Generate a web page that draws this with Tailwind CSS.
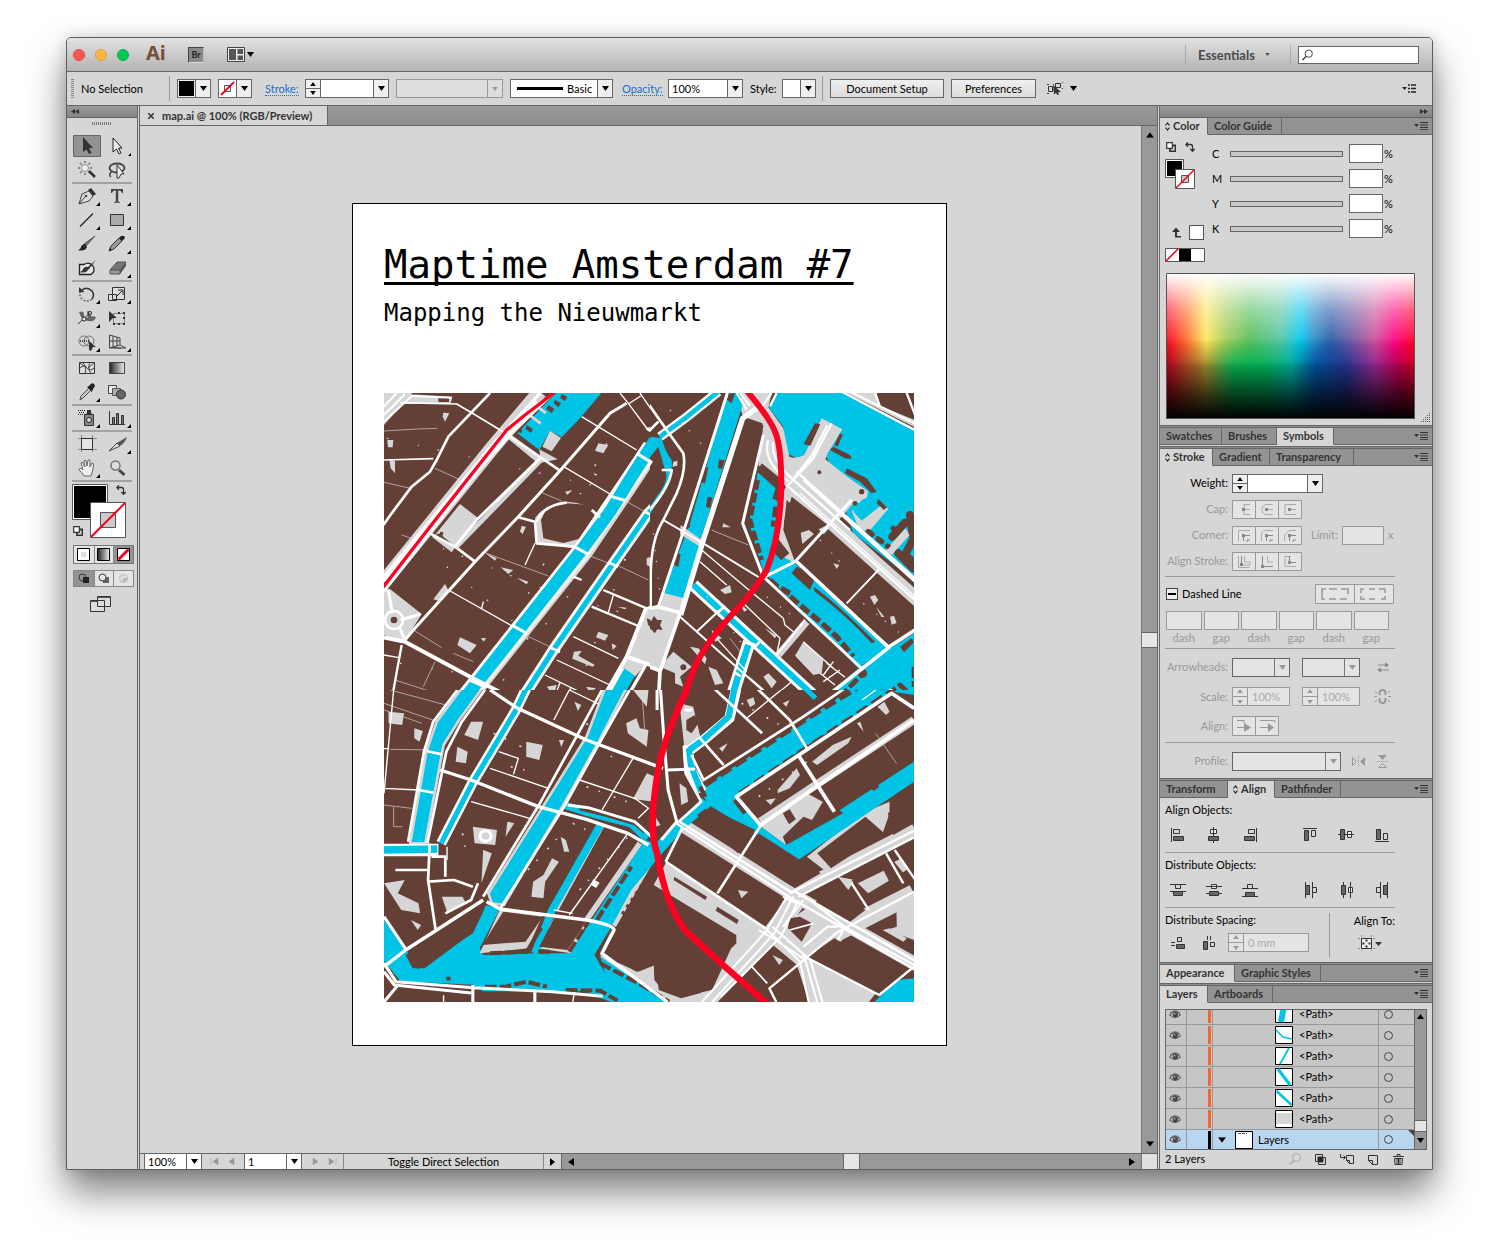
<!DOCTYPE html>
<html lang="en">
<head>
<meta charset="utf-8">
<title>map.ai @ 100% (RGB/Preview)</title>
<script src="https://cdn.jsdelivr.net/npm/@tailwindcss/browser@4"></script>
</head>
<body class="flex min-h-screen flex-col bg-white px-[66px] pt-[37px] pb-[90px] font-['Lato','Liberation_Sans',sans-serif] text-[11px] leading-[14px] text-black">

<!-- Shared glyphs -->
<svg class="hidden">
  <symbol id="down" viewBox="0 0 7 5"><path d="M0 0h7L3.500 5z" fill="currentColor"/></symbol>
  <symbol id="up" viewBox="0 0 7 5"><path d="M0 5h7L3.500 0z" fill="currentColor"/></symbol>
  <symbol id="menu" viewBox="0 0 14 8"><path d="M0 2h5L2.500 5z" fill="#333"/><path d="M6 .5h8M6 3h8M6 5.500h8M6 7.700h8" stroke="#333"/></symbol>
  <symbol id="updown" viewBox="0 0 5 9"><path d="M.5 3.500L2.500 1l2 2.500M.5 5.500L2.500 8l2-2.500" fill="none" stroke="#222" stroke-width="1.200"/></symbol>
  <symbol id="defaults" viewBox="0 0 10 10"><path d="M4 3.500h5.500v6H4z" fill="none" stroke="#333" stroke-width="1.800"/><path d="M.7.7h5.600v5.600H.7z" fill="#fff" stroke="#333" stroke-width="1.200"/></symbol>
  <symbol id="swap" viewBox="0 0 10 10"><path d="M1 2.500h4.500q2 0 2 2V9M3 .3L.8 2.500 3 4.700M5.300 7L7.500 9.300 9.700 7" fill="none" stroke="#333" stroke-width="1.300"/></symbol>
  <symbol id="corner" viewBox="0 0 4 4"><path d="M4 0v4H0z"/></symbol>
  <symbol id="eye" viewBox="0 0 12 9"><path d="M.5 4.800Q6-1.500 11.500 4.800 6 10 .5 4.800z" fill="#c6c6c6" stroke="#444"/><path d="M1 3Q6-1.500 11 3" fill="none" stroke="#444" stroke-width=".7"/><circle cx="6.300" cy="4.500" r="2.600" fill="#444"/><circle cx="5.600" cy="3.800" r=".8" fill="#ccc"/></symbol>
</svg>

<main class="flex flex-1 flex-col rounded-t-[5px] border border-[#5e5e5e] bg-[#d6d6d6] shadow-[0_22px_38px_rgba(0,0,0,0.5),0_0_14px_rgba(0,0,0,0.15)]">

  <!-- Title bar -->
  <header class="flex h-[34px] items-center rounded-t-[4px] border-b border-[#666] bg-linear-to-b from-[#e2e2e2] to-[#b4b4b4] pr-[13px] pl-[6px]">
    <button aria-label="Close" class="size-3 rounded-full border border-[#e2463f] bg-[#fc5753]"></button>
    <button aria-label="Minimize" class="ml-[10px] size-3 rounded-full border border-[#e0a032] bg-[#fdb844]"></button>
    <button aria-label="Zoom" class="ml-[10px] size-3 rounded-full border border-[#12ac46] bg-[#00ca56]"></button>
    <span class="ml-[17px] w-[20px] pb-1 font-['Noto_Sans',sans-serif] text-[20px] leading-6 font-bold text-[#74503a]">Ai</span>
    <button class="ml-[22px] size-4 border border-r-[#bbb] border-b-[#ddd] border-l-[#444] border-t-[#444] bg-[#8a8a8a] text-[9px] leading-[14px] font-bold text-[#222]">Br</button>
    <button aria-label="Arrange documents" class="ml-[23px] flex items-center gap-[2px]">
      <svg class="h-[15px] w-[18px]" viewBox="0 0 18 15"><path d="M.5.5h17v14H.5z" fill="#eee" stroke="#444"/><path d="M2 2h7v11H2zM10.500 2H16v5h-5.500zM10.500 8.500H16V13h-5.500z" fill="#555"/></svg>
      <svg class="h-[5px] w-[7px]"><use href="#down"/></svg>
    </button>
    <button class="ml-auto flex h-5 w-[106px] items-center gap-[9px] border-x border-[#aaa] pl-[12px] text-[13px] font-bold text-[#4a4a4a]">Essentials <svg class="ml-px h-[3px] w-[5px]"><use href="#down"/></svg></button>
    <label class="ml-[7px] flex h-[18px] w-[121px] items-center border border-[#666] bg-white px-[3px]">
      <svg class="size-[12px]" viewBox="0 0 12 12" fill="none" stroke="#333"><circle cx="7.500" cy="4.500" r="4"/><path d="M4.500 7.500L.5 11.500" stroke-width="1.500"/></svg>
      <input aria-label="Search" class="w-full min-w-0 outline-none">
    </label>
  </header>

  <!-- Control bar -->
  <div class="flex h-[34px] items-center border-b border-[#666] bg-[#d6d6d6] pr-4 pl-1">
    <svg class="h-5 w-[3px]"><path d="M1.500 0v20" stroke="#888" stroke-width="3" stroke-dasharray="1 1"/></svg>
    <span class="ml-[7px] w-[88px]">No Selection</span>
    <span class="h-[25px] w-[8px] border-l border-[#999]"></span>
    <button aria-label="Fill" class="flex h-[19px] w-[34px] border border-[#666] bg-[#efefef]"><span class="m-px h-[15px] w-[15px] bg-black"></span><span class="flex h-full flex-1 items-center justify-center border-l border-[#666]"><svg class="h-[5px] w-[7px]"><use href="#down"/></svg></span></button>
    <button aria-label="Stroke color" class="ml-[7px] flex h-[19px] w-[34px] border border-[#666] bg-[#efefef]"><svg class="h-[17px] w-[17px]" viewBox="0 0 17 17"><path d="M0 0h17v17H0z" fill="#fff"/><path d="M5.500 5.500h6v6h-6z" fill="none" stroke="#555"/><path d="M2 15L15 2" stroke="#f00020" stroke-width="1.800"/></svg><span class="flex h-full flex-1 items-center justify-center border-l border-[#666]"><svg class="h-[5px] w-[7px]"><use href="#down"/></svg></span></button>
    <a href="#stroke" class="ml-[13px] w-[40px] text-[#1a6fd0]"><span class="border-b border-dotted border-[#1a6fd0]">Stroke:</span></a>
    <div class="flex h-[19px] w-[84px] border border-[#666] bg-white">
      <div class="flex w-[15px] flex-col border-r border-[#666] bg-[#efefef]">
        <button aria-label="Increase stroke" class="flex flex-1 items-center justify-center border-b border-[#666]"><svg class="h-1 w-[6px]"><use href="#up"/></svg></button>
        <button aria-label="Decrease stroke" class="flex flex-1 items-center justify-center"><svg class="h-1 w-[6px]"><use href="#down"/></svg></button>
      </div>
      <input aria-label="Stroke weight" class="min-w-0 flex-1 px-1 outline-none">
      <button aria-label="Stroke weights" class="flex w-[15px] items-center justify-center border-l border-[#666] bg-[#efefef]"><svg class="h-[5px] w-[7px]"><use href="#down"/></svg></button>
    </div>
    <div class="relative ml-[7px] h-[19px] w-[107px]">
      <select aria-label="Variable width profile" disabled class="h-full w-full appearance-none border border-[#999] bg-[#dedede]"></select>
      <span class="pointer-events-none absolute inset-y-px right-px flex w-[15px] items-center justify-center border-l border-[#999] text-[#999]"><svg class="h-1 w-[6px]"><use href="#down"/></svg></span>
    </div>
    <button aria-label="Brush definition" class="ml-[7px] flex h-[19px] w-[103px] items-center border border-[#666] bg-white"><span class="ml-[6px] h-[3px] w-[46px] bg-black"></span><span class="ml-[4px]">Basic</span><span class="ml-auto flex h-full w-[15px] items-center justify-center border-l border-[#666] bg-[#efefef]"><svg class="h-[5px] w-[7px]"><use href="#down"/></svg></span></button>
    <a href="#opacity" class="ml-[9px] w-[46px] text-[#1a6fd0]"><span class="border-b border-dotted border-[#1a6fd0]">Opacity:</span></a>
    <div class="flex h-[19px] w-[75px] border border-[#666] bg-white">
      <input aria-label="Opacity" value="100%" class="min-w-0 flex-1 px-[3px] outline-none">
      <button aria-label="Opacity values" class="flex w-[15px] items-center justify-center border-l border-[#666] bg-[#efefef]"><svg class="h-[5px] w-[7px]"><use href="#down"/></svg></button>
    </div>
    <span class="ml-[7px] w-[32px]">Style:</span>
    <button aria-label="Graphic style" class="flex h-[19px] w-[34px] border border-[#666] bg-[#efefef]"><span class="h-full w-[17px] bg-white"></span><span class="flex h-full flex-1 items-center justify-center border-l border-[#666]"><svg class="h-[5px] w-[7px]"><use href="#down"/></svg></span></button>
    <span class="ml-[6px] h-[25px] w-[8px] border-l border-[#999]"></span>
    <button class="h-[19px] w-[114px] border border-[#666] bg-linear-to-b from-[#f0f0f0] to-[#dcdcdc]">Document Setup</button>
    <button class="ml-[7px] h-[19px] w-[85px] border border-[#666] bg-linear-to-b from-[#f0f0f0] to-[#dcdcdc]">Preferences</button>
    <button aria-label="Select similar objects" class="ml-[11px] flex items-center gap-[6px]">
      <svg class="h-[14px] w-[17px]" viewBox="0 0 17 14"><path d="M1.500 4.500h4v5h-4zM8.500 1.500h5v4h-5z" fill="none" stroke="#333"/><path d="M0 2.500h2M0 11.500h2M6 2.500h1M14.500 0h2M15 6.500h1" stroke="#333"/><path d="M6 3l8 7-3 .3 1 2-1.500 1-1.500-2.500-2 1.700z" fill="#333"/></svg>
      <svg class="h-[5px] w-[7px]"><use href="#down"/></svg>
    </button>
    <button aria-label="Control bar menu" class="ml-auto"><svg class="h-[9px] w-[14px]" viewBox="0 0 14 9"><path d="M0 3h5L2.500 6z" fill="#222"/><path d="M6 1h2m1 0h5M6 4.500h2m1 0h5M6 8h2m1 0h5" stroke="#222" stroke-width="1.500"/></svg></button>
  </div>

  <div class="flex flex-1">

    <!-- Tools -->
    <aside class="flex w-[71px] flex-col border-r border-[#666] bg-[#d6d6d6]">
      <button aria-label="Collapse tools" class="flex h-[12px] items-center border-b border-[#666] bg-linear-to-b from-[#9a9a9a] to-[#858585] pl-1"><svg class="h-[5px] w-[8px]" viewBox="0 0 8 5"><path d="M4 0v5L0 2.500zM8 0v5L4 2.500z" fill="#333"/></svg></button>
      <svg class="mt-[4px] mb-[9px] h-[3px] w-[20px] self-center"><path d="M0 1.500h20" stroke="#777" stroke-width="3" stroke-dasharray="1 1"/></svg>
      <div class="px-[5px] [&_button]:flex [&_button]:h-6 [&_button]:items-center [&_button]:justify-center [&_svg]:h-[22px] [&_svg]:w-[28px]">
        <div class="grid grid-cols-2 border-b-2 border-[#a2a2a2]">
          <button aria-label="Selection"><svg viewBox="-14 -11 28 22"><path d="M-13.500-10.500h27v21h-27z" fill="#939393" stroke="#666"/><path d="M-4-9L6 2H2L4.500 7 2 8-.5 3.500-4 6z" fill="#333"/></svg></button>
          <button aria-label="Direct selection"><svg viewBox="-14 -11 28 22"><path d="M-4-8L5 2H1.500L4 7 2 8-.5 3-4 6z" fill="#eee" stroke="#222"/><use href="#corner" x="11" y="6" width="4" height="4"/></svg></button>
          <button aria-label="Magic wand"><svg viewBox="-14 -11 28 22"><path d="M-2-9v14M-9-2H5M-7-7L3 3M3-7L-7 3" stroke="#888" stroke-width="2" stroke-dasharray="2 1"/><circle cx="-2" cy="-2" r="3.500" fill="#eee" stroke="#999"/><path d="M2 1l6 6" stroke="#333" stroke-width="2.500"/></svg></button>
          <button aria-label="Lasso"><svg viewBox="-14 -11 28 22"><ellipse cy="-2" rx="7.500" ry="4.500" fill="none" stroke="#444" stroke-width="1.800"/><path d="M-5 1q-4 4-1 6" fill="none" stroke="#444" stroke-width="1.500"/><path d="M0-5L7 4H4L2 8 0 8z" fill="#eee" stroke="#333"/></svg></button>
        </div>
        <div class="grid grid-cols-2 border-b-2 border-[#a2a2a2]">
          <button aria-label="Pen"><svg viewBox="-14 -11 28 22"><path d="M-8 8L-5-2 2-5 6 0 2 5zM-8 8l6-7" fill="#ddd" stroke="#444"/><path d="M1-6l3-2 5 6-3 2z" fill="#333"/><circle cx="-1" cy="0" r="1.300" fill="#444"/><use href="#corner" x="9" y="6" width="4" height="4"/></svg></button>
          <button aria-label="Type"><svg viewBox="-14 -11 28 22"><path d="M-6-7H6v4H5Q4.500-5.500 2-5.500H1.200V5Q1.200 6 3 6v.8h-6V6Q-1.200 6-1.200 5V-5.500H-2Q-4.500-5.500-5-3h-1z" fill="#444"/><use href="#corner" x="10" y="6" width="4" height="4"/></svg></button>
          <button aria-label="Line"><svg viewBox="-14 -11 28 22"><path d="M-7 6.500L6-6.500" stroke="#222" stroke-width="1.300"/><use href="#corner" x="9" y="6" width="4" height="4"/></svg></button>
          <button aria-label="Rectangle"><svg viewBox="-14 -11 28 22"><path d="M-6.500-5.500h13v11h-13z" fill="#aaa" stroke="#333"/><use href="#corner" x="10" y="6" width="4" height="4"/></svg></button>
          <button aria-label="Paintbrush"><svg viewBox="-14 -11 28 22"><path d="M8-8L-1 2l-2-2z" fill="#777" stroke="#555"/><path d="M-2 0l2 3Q-2 8-9 6q3-1 3-3 1-3 4-3z" fill="#222"/></svg></button>
          <button aria-label="Pencil"><svg viewBox="-14 -11 28 22"><path d="M-8 7l2-5 8-8 3 3-8 8z" fill="#999" stroke="#333"/><path d="M2-6q3-4 6-1 0 2-3 4zM-8 7l1-3 2 2z" fill="#222"/><use href="#corner" x="10" y="6" width="4" height="4"/></svg></button>
          <button aria-label="Blob brush"><svg viewBox="-14 -11 28 22"><path d="M-7.500-3.500H-3Q2-7 6-2q3 5-2 8.500h-11.500z" fill="#e4e4e4" stroke="#222" stroke-width="1.300"/><path d="M9-8L2 1-1 4q-5 1-6 0 3-1 3-3 2-3 5-2z" fill="#333"/></svg></button>
          <button aria-label="Eraser"><svg viewBox="-14 -11 28 22"><path d="M-7 2L0-6h9L3 2z" fill="#777" stroke="#555"/><path d="M-7 2H3v4h-10z" fill="#999" stroke="#555"/><path d="M3 2l6-8v4L3 6z" fill="#555"/><use href="#corner" x="10" y="6" width="4" height="4"/></svg></button>
        </div>
        <div class="grid grid-cols-2 border-b-2 border-[#a2a2a2]">
          <button aria-label="Rotate"><svg viewBox="-14 -11 28 22"><path d="M-5-4Q0-8 5-3q3 4 0 8" fill="none" stroke="#333" stroke-width="1.500"/><path d="M5 5Q0 9-5 5q-3-3-2-7" fill="none" stroke="#666" stroke-width="1.500" stroke-dasharray="2 1.500"/><path d="M-8-7v5.500l5.500-.5z" fill="#333"/><use href="#corner" x="9" y="6" width="4" height="4"/></svg></button>
          <button aria-label="Scale"><svg viewBox="-14 -11 28 22"><path d="M-4.500-6.500h12v12h-12zM-8.500.500h8v6h-8z" fill="#ddd" stroke="#333"/><path d="M-1 3l6-6M1-4h5v5" fill="none" stroke="#222"/><use href="#corner" x="10" y="6" width="4" height="4"/></svg></button>
          <button aria-label="Width"><svg viewBox="-14 -11 28 22"><path d="M-8-6q5-2 5 3t4 2q-2-6 0-6t3 5l5 1q-1 5-8 4-7-1-9-9z" fill="#666"/><path d="M-9 6L4-6" stroke="#333"/><circle cx="-3" cy="1" r="2" fill="#eee" stroke="#222"/><circle cx="3" cy="-5" r="1.500" fill="#eee" stroke="#222"/><use href="#corner" x="9" y="6" width="4" height="4"/></svg></button>
          <button aria-label="Free transform"><svg viewBox="-14 -11 28 22"><path d="M-3.500-4.500h11v10h-11z" fill="none" stroke="#333" stroke-dasharray="1 1"/><path d="M-8-7l8 7h-4l-4 4z" fill="#333"/><path d="M6-6h2v2H6zM6 5h2v2H6zM-4 5h2v2h-2zM1-6h2v2H1zM1 5h2v2H1zM6-1h2v2H6z" fill="#333"/></svg></button>
          <button aria-label="Shape builder"><svg viewBox="-14 -11 28 22"><circle cx="-3" cy="-1" r="5" fill="none" stroke="#777"/><circle cx="2" cy="-1" r="5" fill="none" stroke="#777"/><path d="M-7-1H3" stroke="#222" stroke-width="1.500" stroke-dasharray="1 1"/><path d="M2-1l7 6H6L4 9 2 8z" fill="#333"/><use href="#corner" x="9" y="6" width="4" height="4"/></svg></button>
          <button aria-label="Perspective grid"><svg viewBox="-14 -11 28 22"><path d="M-7.500-7v13h16M-7.500-7L3-4v7L-7.500 6M-4-6V5M0-5V4M-7.500-1H3M3 3l6 3M-4 5l8 1.500" fill="none" stroke="#444"/><use href="#corner" x="10" y="6" width="4" height="4"/></svg></button>
        </div>
        <div class="grid grid-cols-2 border-b-2 border-[#a2a2a2]">
          <button aria-label="Mesh"><svg viewBox="-14 -11 28 22"><path d="M-7.500-5.500h15v11h-15z" fill="#ddd" stroke="#333"/><path d="M-7 0q4-4 7 0t7 0M-4-5q4 3 2 11M3-5q-3 4 1 11M-7-5l5 4M7-5L1 0" fill="none" stroke="#444"/></svg></button>
          <button aria-label="Gradient"><svg viewBox="-14 -11 28 22"><defs><linearGradient id="gt"><stop stop-color="#222"/><stop offset="1" stop-color="#eee"/></linearGradient></defs><path d="M-7.500-5.500h15v11h-15z" fill="url(#gt)" stroke="#444"/></svg></button>
          <button aria-label="Eyedropper"><svg viewBox="-14 -11 28 22"><path d="M-7 8q0-4 3-6l6-6 2 2-7 7q-2 2-4 3z" fill="#ccc" stroke="#444"/><path d="M0-5l2-1q3-4 5-2t-1 5L5 0z" fill="#222"/><use href="#corner" x="9" y="6" width="4" height="4"/></svg></button>
          <button aria-label="Blend"><svg viewBox="-14 -11 28 22"><path d="M-8.500-6.500h8v8h-8z" fill="#eee" stroke="#444"/><path d="M-4.500-3.500h8v7h-8z" fill="#aaa" stroke="#555"/><circle cx="4" cy="2.500" r="4.500" fill="#666" stroke="#333"/></svg></button>
        </div>
        <div class="grid grid-cols-2 border-b-2 border-[#a2a2a2]">
          <button aria-label="Symbol sprayer"><svg viewBox="-14 -11 28 22"><path d="M-2.500-3.500h9v11h-9z" fill="#888" stroke="#333"/><path d="M0-8h4v3l1 1h-6l1-1z" fill="#333"/><circle cx="2" cy="2" r="2.500" fill="#ddd" stroke="#222"/><path d="M-9-7.500h8M-8-5.500h6M-9-3.500h5" stroke="#222" stroke-dasharray="1 1"/><use href="#corner" x="9" y="6" width="4" height="4"/></svg></button>
          <button aria-label="Column graph"><svg viewBox="-14 -11 28 22"><path d="M-7.500-7v13.500H8" fill="none" stroke="#333"/><path d="M-4.500-.5h2v7h-2zM-.5-4.500h2v11h-2zM4.500-2.500h2v9h-2z" fill="#777" stroke="#333"/><use href="#corner" x="10" y="6" width="4" height="4"/></svg></button>
        </div>
        <div class="grid grid-cols-2 border-b-2 border-[#a2a2a2]">
          <button aria-label="Artboard"><svg viewBox="-14 -11 28 22"><path d="M-9-5.500h19M-9 5.500h19M-5.500-9V8M5.500-9V8" stroke="#888"/><path d="M-5.500-5.500h11v11h-11z" fill="#e4e4e4" stroke="#333"/></svg></button>
          <button aria-label="Slice"><svg viewBox="-14 -11 28 22"><path d="M10-7L0-1l3 3q5-3 7-9z" fill="#555"/><path d="M0-1l3 3-11 5z" fill="#ddd" stroke="#444"/><use href="#corner" x="10" y="6" width="4" height="4"/></svg></button>
          <button aria-label="Hand"><svg viewBox="-14 -11 28 22"><path d="M-3 8q-2-4-5-6 0-3 4-.5L-6-5q1-2 2 0l2 4-1-6q1-2 2 0l1 5 1-6q2-1 2 1L3-1l2-4q2 0 1.500 2Q6 3 4 8z" fill="#eee" stroke="#666"/><use href="#corner" x="9" y="6" width="4" height="4"/></svg></button>
          <button aria-label="Zoom tool"><svg viewBox="-14 -11 28 22"><path d="M2 2l5.500 5" stroke="#444" stroke-width="3"/><circle cx="-1.500" cy="-2.500" r="4.500" fill="#ddd" stroke="#777" stroke-width="1.500"/></svg></button>
        </div>
      </div>
      <svg class="mt-[2px] ml-[5px] h-[56px] w-[60px]" viewBox="0 0 60 56"><path d="M.5.5h35v35H.5z" fill="#fff" stroke="#555"/><path d="M2 2h32v32H2z"/><path d="M18.500 18.500h35v35h-35z" fill="#fff" stroke="#555"/><path d="M28.500 28.500h15v15h-15z" fill="#ccc" stroke="#555"/><path d="M19 53L53 19" stroke="#f00020" stroke-width="2"/><use href="#swap" x="44" y="1" width="10" height="10"/><use href="#defaults" x="1" y="42" width="10" height="10"/></svg>
      <div class="mt-[5px] ml-[6px] grid h-[19px] w-[61px] grid-cols-3 border border-[#777] bg-[#e4e4e4]">
        <button aria-label="Color" class="flex items-center justify-center"><svg class="size-[13px]"><path d="M.5.5h12v12H.5z" fill="#fff" stroke="#000"/><path d="M4 4h5v5H4z" fill="#ddd"/></svg></button>
        <button aria-label="Gradient fill" class="flex items-center justify-center border-l border-[#888]"><svg class="size-[13px]"><path d="M.5.5h12v12H.5z" fill="url(#gt)" stroke="#000"/></svg></button>
        <button aria-label="None" class="flex items-center justify-center border-l border-[#888] bg-[#939393]"><svg class="size-[13px]"><path d="M.5.5h12v12H.5z" fill="#fff" stroke="#000"/><path d="M1.500 11.500l10-10" stroke="#f00020" stroke-width="3"/></svg></button>
      </div>
      <div class="mt-[6px] ml-[6px] grid h-[17px] w-[61px] grid-cols-3 border border-[#888] bg-[#e4e4e4]">
        <button aria-label="Draw normal" class="flex items-center justify-center bg-[#939393]"><svg class="h-[11px] w-[12px]"><circle cx="4.500" cy="4.500" r="3.500" fill="none" stroke="#333"/><path d="M5 4h6v6H5z" fill="#222"/></svg></button>
        <button aria-label="Draw behind" class="flex items-center justify-center border-l border-[#888]"><svg class="h-[11px] w-[12px]"><path d="M5 4h6v6H5z" fill="#666"/><circle cx="4.500" cy="4.500" r="3.500" fill="#eee" stroke="#333"/></svg></button>
        <button aria-label="Draw inside" disabled class="flex items-center justify-center border-l border-[#888]"><svg class="h-[11px] w-[12px]"><circle cx="5.500" cy="5.500" r="4" fill="#ddd" stroke="#bbb"/><path d="M5 5h4q0 4-4 4z" fill="#bbb"/></svg></button>
      </div>
      <button aria-label="Screen mode" class="mt-[9px] ml-[23px] w-[21px]"><svg class="h-[16px] w-[21px]"><path d="M.5 4.500h14v11H.5zM7.500.5h13v10h-13z" fill="#ddd" stroke="#333"/><path d="M1 5.500h6M8 1.500h12" stroke="#555"/></svg></button>
    </aside>

    <!-- Document -->
    <section class="ml-px flex min-w-0 flex-1 flex-col border-x border-[#666]">
      <div class="flex h-[20px] border-b border-[#666] bg-linear-to-b from-[#999] to-[#8e8e8e]">
        <div class="flex w-[188px] items-center gap-[8px] border-r border-[#666] bg-[#d6d6d6] pl-[8px] font-bold text-[#333]"><button aria-label="Close document"><svg class="size-[6px]" viewBox="0 0 6 6"><path d="M0 0l6 6M6 0L0 6" stroke="#333" stroke-width="1.500"/></svg></button><span class="whitespace-nowrap">map.ai @ 100% (RGB/Preview)</span></div>
      </div>
      <div class="flex flex-1">
        <div class="flex min-w-0 flex-1 justify-center pt-[77px] pb-[107px] pl-[18px]">
          <article class="self-start border border-black bg-white pt-[38px] pr-[32px] pb-[43px] pl-[31px] font-['DejaVu_Sans_Mono',monospace]">
            <h1 class="text-[39px] leading-[46px] whitespace-nowrap underline decoration-[3px] underline-offset-[4px] [text-decoration-skip-ink:none]">Maptime Amsterdam #7</h1>
            <p class="mt-[11px] text-[24px] leading-[28px] whitespace-nowrap">Mapping the Nieuwmarkt</p>
            <svg class="mt-[66px] h-[609px] w-[530px]" viewBox="384 393 530 609" fill="none" stroke-linejoin="round">
              <path d="M384 393h530v609H384z" fill="#643f36"/>

              <!-- North-west quarter -->
              <svg x="384" y="393" width="266" height="297" viewBox="12 9 798 891">
                <g fill="#d6d6d6">
                  <path d="M12 9h85L12 105zM80 12l137 8-5 20-142 2zM240 342l55 43-70 85-60-35zM155 440l60 47 12-17-50-40zM0 595l30 2 95 75-50 80-75-20zM195 582l10 18-30 32-15-4zM470 460l-5-75q25-40 95-50 80 5 92 45l-12 50q-40 25-60 45zM795 655l45-15v190l-105-30zM735 800l60 25-30 35-45-25zM395 135l85 62-10 20-85-70zM478 178l55 30-50 10z"/>
                  <path d="M190 68l18 2-13 25-7-15zM22 150h18l-2 22H24zM28 210l17 2v38l-13-15zM655 160l30 5-15 25-25-8zM425 408l13 2-10 22-8-7zM240 742l50 23-20 25-38-25zM315 488l35 17-5 7zM362 532l38 8-15 12zM410 563l35 12-5 8zM655 725l30 10-10 17-27-10zM582 785l23-3-10 15 50 28-8 5-60-24zM695 760l15 8-12 12zM500 890l30-5-10 30zM618 890l30 5-18 12zM712 650l28 3-5 5zM800 505l12-5v30l-12-5zM640 250l12 3-5 5zM555 305l22-5-15 15zM302 745l16-2-6 12z"/>
                </g>
                <g stroke="#d6d6d6">
                  <path d="M12 575L340 170 480 5" stroke-width="44"/>
                  <path d="M490 203L230 470" stroke-width="14"/>
                  <path d="M20 145L700 300M100 440L600 640M60 820L560 900M560 620L800 690M200 530L480 760" stroke-width="4" stroke-dasharray="5 91 3 57"/>
                  <path d="M680 160L430 640M500 700L300 860M760 440L600 880" stroke-width="5" stroke-dasharray="4 67 6 91"/>
                  <path d="M12 277l80 18M12 123l100-6 60-2M165 235l70 32M65 435l35 12M320 490l185 68M100 720l85 53M45 870l185 60M165 815l-35 75M740 335l100 55M610 490l90 35M710 525l95 45M435 735l85 40M485 308l60 25M220 790l60 25" stroke-width="2"/>
                </g>
                <path d="M483 390l17-35 60-15 72 5 14 38-6 30-35 32-55 14-60-14zM175 22h32v14h-32zM800 685l15 5 10-15 12 15h10v40l-15-8-15 10-3-18-10-10zM180 425l10 2-1 10-9-2z" fill="#643f36"/>
                <path d="M528 9h136l-64 76-55 57-35-20-32 58-66-50z" fill="#00c4e6"/>
                <path d="M510 122l33 22-28 40-28-14zM455 75l30 22-5 7-30-22zM480 50l20 15-5 8-20-15z" fill="#d6d6d6"/>
                <path d="M505 45l18 12-8 12-16-12zM525 30l18 10-8 12-14-12zM545 12l16 8-6 14-14-10zM440 105l18 12-5 12-16-12zM415 115l12 4-2 10-10-2z" fill="#643f36"/>
                <path d="M815 175L760 260 612 480 250 935" stroke="#d6d6d6" stroke-width="60"/>
                <path d="M815 170L755 260 610 475 250 930" stroke="#fff" stroke-width="54"/>
                <path d="M832 140L755 260 690 365 605 480 420 715 250 930" stroke="#00c4e6" stroke-width="37"/>
                <path d="M770 190l45 28M695 320l42 12M583 470l40 22M395 705l40 22M268 870l50 22" stroke="#fff" stroke-width="9"/>
                <path d="M845 330L805 370 700 520 520 780 420 935" stroke="#fff" stroke-width="33"/>
                <path d="M845 330L805 370 700 520 520 780 420 935" stroke="#00c4e6" stroke-width="16"/>
                <path d="M795 365l20 12M688 518l26 12M510 772l30 14" stroke="#fff" stroke-width="8"/>
                <path d="M733 835l32 22-45 80h-45z" fill="#00c4e6"/>
                <g stroke="#fff">
                  <path d="M12 50L50 9M12 75L75 12M12 95L95 18l120 5" stroke-width="6"/>
                  <path d="M60 38l170 4 45 26 110 67M12 210l148-4" stroke-width="5"/>
                  <path d="M480 9L335 170 12 558M12 603L300 235 395 130 520 9" stroke-width="9"/>
                  <path d="M12 575L340 170 470 35" stroke-width="22"/>
                  <path d="M330 9L205 140l-35 70-20 35-55 45-60 80-25 35M390 140l150 102M150 430l75 40 60 45M415 382l50 13 5 65 115 10M470 395q20-50 90-57M635 360l25 22" stroke-width="8"/>
                  <path d="M740 40l-50 30-150 172-125 138-130 135-185 205-25 30M480 205L290 390l-65 80" stroke-width="9"/>
                  <path d="M12 742l63 13 195 105 140 72M740 800l100 35M798 655l-58 145-60 105" stroke-width="12"/>
                  <path d="M205 600l195 110M555 232l145 86M605 80l165 100M720 9l25 31 57 77 38-22M780 9l60 88M745 42l37-24M580 740l135 65M530 810l160 75M495 855l155 75M572 895l-20 35M700 615l-15 53M465 460l-30 65M540 878l-20 52M310 635l-5 20M12 795l45 8" stroke-width="4"/>
                  <path d="M65 765L35 930M670 600l130 55 40-15M635 650l140 58M580 560l25 10" stroke-width="7"/>
                  <path d="M845 415q-35 60-32 130v110M800 115l35 25" stroke-width="8"/>
                  <path d="M25 600l12 70M60 715l12 30M62 690l60-18" stroke-width="9"/>
                  <circle cx="42" cy="690" r="27" stroke-width="8"/>
                  <path d="M727 836l-55 99M797 825l-60 105" stroke-width="10"/>
                </g>
                <circle cx="42" cy="690" r="10" fill="#643f36"/>
                <path d="M12 588L150 410 380 120l55-45 87-66" stroke="#ff0022" stroke-width="10"/>
              </svg>

              <!-- North-east quarter -->
              <svg x="650" y="393" width="264" height="297" viewBox="30 9 792 891">
                <path d="M385 50l30-41h195l212 106v455L640 430 560 200l-90 5-30-15-10-80z" fill="#00c4e6"/>
                <g fill="#d6d6d6">
                  <path d="M290 9h105l-10 43 45 63 18 85q20 8 45-5l52-110 62 33-43 70-8 20 70 55 58 40-5 32-40 6-42 48 125 115 102 90v90L440 330 430 420l35 95-25 5-35-80-15-180-35-35 15-120-60-20zM620 9h202v101z"/>
                  <path d="M715 340l30 17-60 70-30-15-20-50zM795 415l15 18-55 62-20-12z"/>
                  <path d="M0 655l60-10 62 20-57 180-65-20zM72 605l63 15-13 47-68-17zM100 785l55 45-35 30 10 30-25-10 0-30-45-20z"/>
                </g>
                <path d="M640 365l25-35 35-15 25 30-60 47z" fill="#00c4e6"/>
                <path d="M710 9h112v80L720 48zM455 320l108 85-53 25-30-5 5 40-25 5-28-75zM485 505l80-87 257 230v85l-75 35zM315 82l52 18-12 102-37 198h-60z" fill="#643f36"/>
                <path d="M482 428l25-8 15 12-35 30z" fill="#d6d6d6"/>
                <path d="M355 235l-28 165 43 145 285 290 95-68-285-247-55-30 10-110v-90z" fill="#00c4e6"/>
                <path d="M650 840l172-110v200H545z" fill="#00c4e6"/>
                <path d="M262 9h38l8 35L185 440l-53 185-62-17 80-208z" fill="#00c4e6"/>
                <path d="M122 405l68 48-5 20-65-40z" fill="#d6d6d6"/>
                <path d="M235 5L135 85 60 140" stroke="#fff" stroke-width="28"/>
                <path d="M235 5L135 85 60 140" stroke="#00c4e6" stroke-width="14"/>
                <path d="M0 180l35-40 30 5q10 40 30 65 5 40-20 85L0 425v-30l50-75q40-50 25-80l-20-70L0 240z" fill="#00c4e6"/>
                <path d="M365 220l50 40 22 30-20 45-20-10 10-30-55-50zM410 440l38 50-25 20-20-20zM455 550l15-20 25 10 30 25-15 35zM520 590q60 40 185 165l-10 5q-70-80-170-155zM780 770l35-25 7 12-30 30zM690 915q30-25 50-12l-40 25zM525 100l16 2-30 65-20-5zM600 130l8 5-15 35-10-5zM580 170l50 25 5 12-20-2-45-25zM620 235l60 30 30 40-15 5-35-35-45-25zM715 327l25 25-8 8-22-20zM262 12l23-3-10 31-14-10zM187 230l18 2-10 48-15-5zM237 208l17 3-8 26-12-3zM203 320l14 3-6 32-13-5zM105 490l17 2-7 38-14-5z" fill="#643f36"/>
                <path d="M757 440l38-42M810 375l8 60M775 490l45 45M800 485l18-35M800 500l20 15" stroke="#643f36" stroke-width="24" stroke-linecap="round"/>
                <path d="M685 425l60 45M760 415l20 15" stroke="#643f36" stroke-width="16" stroke-linecap="round" stroke-dasharray="14 22"/>
                <path d="M795 420l14 15-52 56-16-10z" fill="#d6d6d6"/>
                <path d="M353 270L330 390l35 120" stroke="#643f36" stroke-width="14" stroke-dasharray="30 9"/>
                <path d="M408 350l-8 60M390 570l20 18 40 22M450 620l90 75 50 45 50 60" stroke="#643f36" stroke-width="16" stroke-dasharray="32 10"/>
                <path d="M555 935l60-30 55-55M740 915l40-30 45 40M822 830v60" stroke="#643f36" stroke-width="14" stroke-dasharray="34 9"/>
                <g fill="#643f36"><circle cx="668" cy="850" r="13"/><circle cx="538" cy="247" r="6"/><circle cx="665" cy="305" r="8"/><circle cx="645" cy="340" r="7"/><circle cx="143" cy="408" r="7"/></g>
                <path d="M160 585l375 345" stroke="#fff" stroke-width="36"/>
                <path d="M160 585l375 345" stroke="#00c4e6" stroke-width="18"/>
                <path d="M328 755l-30 95-27 85" stroke="#fff" stroke-width="38"/>
                <path d="M325 765l-28 85-25 85" stroke="#00c4e6" stroke-width="20"/>
                <g fill="#d6d6d6">
                  <path d="M490 755l60 55-5 40-25 5-55-58zM370 860l15-10 25 25-15 20zM205 830l25 10 20 40-25 5zM150 770l25 5 25 30-5 18zM375 715l35 22-5 8zM300 640l22 20-10 5zM240 600l30-15 5 22-20 5zM85 900l25 10 5 25h-25zM690 620l15-5 10 15-12 15zM708 650l25 30-8 2zM750 680l12-3 8 22-15 5zM580 520l18 5-8 12zM22 505h12v30H20zM100 215l12-3v15l-15 3zM250 400l22 12-25 0zM215 720l30 25-20 10z"/>
                </g>
                <g stroke="#d6d6d6"><path d="M540 450l90 100M670 640l110 90M200 620l120 160M90 60l120 130M380 620l80 60M40 430l20 180" stroke-width="4" stroke-dasharray="4 47 3 29"/><path d="M215 420l110 45M270 745l30 40M0 555l25 12" stroke-width="2"/><path d="M415 795l85-100" stroke-width="22"/></g>
                <g stroke="#fff">
                  <path d="M605 5l225 118M630 5l200 98M800 9l25 65M705 9l15 40" stroke-width="7"/>
                  <path d="M440 285l390 350M470 245l360 325M490 270l340 310M455 265l175 155" stroke-width="7"/>
                  <path d="M480 310l350 315" stroke-width="4"/>
                  <path d="M575 100L520 205l-75 80M562 105l-45 90-60 75" stroke-width="7"/>
                  <path d="M385 150q-20 60 60 125M400 155q-10 50 55 110M395 9l-30 42-60 32M410 9l-20 40M300 9l30 38M290 9l30 50" stroke-width="7"/>
                  <path d="M262 9L140 395 55 650" stroke-width="9"/>
                  <path d="M350 55l-42 30-118 365-68 225" stroke-width="16"/>
                  <path d="M370 135l-62 265 62 160 300 280M375 560l90-45 105-115 65-70" stroke-width="9"/>
                  <path d="M465 510l280 262 80-52M750 770L540 935" stroke-width="11"/>
                  <path d="M720 535L620 640M70 390l120 70 180 110M120 680l275 245M170 725l75-70M0 195l35 20-35 55M410 795l85-105" stroke-width="6"/>
                  <path d="M0 5l80 115 50 70q10 50-20 120l-40 80q-38 60-38 170v90M55 95l-35 35M65 240h30q-5 50-70 125" stroke-width="8"/>
                  <path d="M0 662l55-12 65 18M120 670L60 845l-5 90M0 820l60 22" stroke-width="11"/>
                  <path d="M185 480l130 110 115 95 5 20 25 20M180 515l80 70M310 640l110 105-10 50M325 860l75 65M395 925l60-50M230 745l90 100M490 755l90 80M540 850l45 35M580 815l-30 40M600 840l-50 35M560 820l55 42" stroke-width="4"/>
                  <path d="M233 668l22-20M340 775l20-20M690 935l62-35 60 35M280 845l22 14" stroke-width="8"/>
                </g>
                <path d="M20 690l14 2 8-14 10 12h14l-6 16 8 14-16-2-8 12-10-12-16-2 6-12z" fill="#643f36"/>
                <circle cx="130" cy="832" r="9" fill="#643f36"/>
                <path d="M322 5Q390 85 405 125 424 165 424 290 420 440 380 540 340 610 270 680 190 770 165 830L122 940" stroke="#ff0022" stroke-width="18"/>
              </svg>

              <!-- Southern half -->
              <svg x="384" y="690" width="530" height="312" viewBox="12 0 1539 936" preserveAspectRatio="none">
                <g fill="#d6d6d6">
                  <path d="M775 250l25 10-5 75-60-8zM1100 405l140-95 75 42-135 115zM1400 370l80-35v35l-20 60-170 110-50-40zM830 520l40 25 260 175-95 50v-35L795 585zM1190 690l70-50 95 65-135 100-95-65zM1225 790l215 120-20 26h-130zM680 700l-40 95 110 50 50-20 10 75 65 25 70-20 65-120 60-60 90 0-220 211h-120L640 800zM870 40l40 10 25 110-50 20zM270 410l70 10-5 45-60-5zM12 580l60-10-20 40 60 30 5 30-55-10zM180 620l60 0 10 20-55 25zM300 480l25 10-30 90zM1330 560l50 10-20 30zM1500 660l51-20v110l-80-30 30-10zM715 100l30-15 10 30 25 5-5 50-55-40zM265 95l35 0-15 55-40-15zM425 155l48 10-10 45-38-10zM225 170l30 15-5 35-30-5zM25 65l45 5-5 35-40-5zM100 115l25 8-10 32-15-10zM520 150l15 0-8 22zM565 35l20 10-10 18zM1255 215l60-50 55-25-10 20-90 65zM1120 330l30-5-15 20zM1155 300l55-65 10 20-30 40-35 15zM735 0h45l-5 50zM1445 50l20-15 15 30-10 10z"/>
                  <path d="M500 505l20 10-40 60-5 50-35-5 5-45 30-20zM870 280l20 15 5 40-20 10zM800 380l15 25-15 5zM1040 600l30 5-20 20zM1485 520l30-15 20 30-25 20zM1320 765l20 10-15 40-20-5zM1140 795l30 15-10 15zM525 440l15 10 10 35-15 0zM370 395l20 5-25 40zM90 690l30 15-10 15zM1460 720l20-5 50 30-10 10zM1385 100l10-5 10 30zM985 175l25-15-15 25zM1065 30l20-8 5 20-15 10zM1170 40l20-10-10 20z"/>
                </g>
                <g stroke="#d6d6d6">
                  <path d="M330 130l120 60M600 100l80 110M600 290l130 50M430 540l90-100M580 600l150-170M1050 40l120 70M1100 320l160-120M1300 480l110-60M1390 840l80 30M560 400l50 25M380 230l80 20M240 430l10 60" stroke-width="5" stroke-dasharray="6 31 4 43"/>
                  <path d="M12 40l170 60M30 0l180 50M12 60l110 40M12 345l80 10M40 350v60h25M160 180l-130-2M1440 130l60 90M760 0l10 130" stroke-width="2"/>
                  <path d="M870 400l330 215 360 210M1195 610l360-190" stroke-width="40"/>
                  <path d="M1215 625l-80 110-200 210M1130 720l105 90 40 130M1551 610l-220 115-110 95" stroke-width="54"/>
                  <path d="M795 490L675 705M1551 90L1105 395" stroke-width="24"/>
                  <path d="M755 460L600 690M645 405L510 660" stroke-width="16"/>
                </g>
                <!-- Water -->
                <g stroke="#d6d6d6" stroke-width="8" fill="#00c4e6">
                  <path d="M240-9h60L230 90l-45 75-53 295H88l47-275 30-90zM655-9h63l-83 165-105 194-170 295-35-5-10-30 155-255 130-215z"/>
                </g>
                <g fill="#00c4e6">
                  <path d="M310 645l38 12-58 118 10 20 155-5 90 0 70-10 80 140 110 20h-125l-85-36H300l-30-20-210-10-48-60V690l78 110 20 38 130-88 45-70z"/>
                  <path d="M935 325l30 20-85 75-60 70-90 110-55 105-52 90-75-5 67-100 155-240 30 10 60-60z"/>
                  <path d="M925 300L1250 80l120-85h181v20l-60-10L1235 170 1035 320l65 85 80 60 371-250v60L1215 510 955 345l-55-95 25-10z"/>
                  <path d="M1551 865l-50 5-65 66h115zM640 800l200 136H680z"/>
                  <path d="M350 655l125 15-45 105-140 15zM510 675l95 15-50 100-100-15z" fill="#d6d6d6"/>
                </g>
                <path d="M425-5l-30 65-127 220-90 180" stroke="#fff" stroke-width="30"/>
                <path d="M12 480h158" stroke="#fff" stroke-width="38"/>
                <g stroke="#00c4e6">
                  <path d="M425-5l-30 65-127 220-90 180M1235-5l30 30" stroke-width="15"/>
                  <path d="M12 480l155-3M640 405L500 660l-50 130M535 345l65 22 130 35 45 45" stroke-width="22"/>
                </g>
                <path d="M1035-5l-20 90-75 65-45 35 5 50 35 70" stroke="#fff" stroke-width="30"/>
                <path d="M1030-5l-17 85-75 70-40 30 5 45 30 80" stroke="#00c4e6" stroke-width="18"/>
                <g fill="#643f36">
                  <path d="M358 665l115 15-50 75-125 10zM508 680l92 12-55 88-82-10zM75 795l230-140-35 75-30 20-110 85h-35zM790 585l235 160-5 30-55 125-90 20-50-15-28-35-2-60-50 35-65-40 20-60zM940 400l30-40 120 60-50 70zM1050 490l50-60 180 120-75 45zM1260 640l60-45 90 65-50 40zM1190 685l30-5 35 20-30 55-40-40zM1370 570l115-65 40 50-105 90zM1240 800l80-55 170 105-50 60z"/>
                  <path d="M855 560l95 60-5 10-92-60zM980 650l62 40-5 12-62-40zM1170 440l60-60 25 10 40-70 50 50-165 95zM1270 490l140-110 55 50-155 105zM1475 370l76-60v90l-60 35zM1350 250l40-30 60 70-15 12zM1330 290l20-10 20 50-15 10zM1170 370l20-12 18 30-20 15zM1470 160l50-30 31 60-45 30zM890 90l25-15 10 25-20 30-15-10z"/>
                </g>
                <path d="M1388 580l75-38 15 30-60 38z" fill="#d6d6d6"/>
                <g stroke="#643f36">
                  <path d="M945 285L1250 80l150-95M1045 310L1230 180l180-125 100-70" stroke-width="14" stroke-dasharray="38 14"/>
                  <path d="M320 790l110-5M460 785h40M430 780l40-70M550 785l55-90M630 690l100-160M305 890h60l60-15 60 15M540 900l100 2 50 30M640 820l120 65 80 50" stroke-width="12" stroke-dasharray="34 9"/>
                  <path d="M580 355l80 20 80 25 30 25M930 290l15 30M950 360l-25 20M1030 330l30 40" stroke-width="12"/>
                  <path d="M790 545l-90 140" stroke-width="16" stroke-dasharray="10 14"/>
                  <path d="M193 866h12" stroke-width="12"/>
                </g>
                <g stroke="#fff">
                  <path d="M135 183l45 10M112 300l43 8M225 0L155 95 128 185 82 455M305 0L238 95l-45 90-55 275" stroke-width="8"/>
                  <path d="M320 0l80 55 200 95 222 85M175 240l90 30 195 80 140 38 120 42 60 35" stroke-width="10"/>
                  <path d="M645 0L462 345 300 620M725 0L640 155 535 350 350 655" stroke-width="8"/>
                  <path d="M300 630L75 780l-63 50M310 635l40 22 250 33q80 15 80 30l-35 70 190 146" stroke-width="10"/>
                  <path d="M12 680l65 100M12 820l35 55 225 18 230 12 145 14M12 845l30 40 230 25M12 936l40-50M450 905v31M270 885v51" stroke-width="9"/>
                  <path d="M815 0l10 150 12 150 25 95-45 55M835 240l80-3M545 345l60 8 135 42 60 55M805 60v-60M885 60h22" stroke-width="9"/>
                  <path d="M145 460l-5 110 22 150M140 575l75-5 55 20M285 580l-20 50-75 40M45 540h95M150 500h40l0 60M880 410L830 515" stroke-width="8"/>
                  <path d="M40 0L12 310M12 295l100 5M345 185l57 20-14 48M320 235l170 60M265 335l170 50M550 0l-45 90M550 0l85 42M735 205l-90 155M580 270l160 55 40 30-30 30M12 176h15M195 470v40M505 660l55 10M720 430L550 675M1165 0L1065 85M1440 0l-40 30M560 936l5-30M185 936v-20" stroke-width="4"/>
                  <path d="M970-5l140 135M1095-5l95 95 50 85M905 195l35 75 290-190L1350-5M930 145l68 80M895 170l-12 0 5 80 45 85-70 65" stroke-width="8"/>
                  <path d="M1551 55l-65-45-451 310 70 85L1551 90M1215 195l105 170" stroke-width="11"/>
                  <path d="M1110 400L980 610M830 515l290 200M1200 610L870 395M1551 810l-345-205" stroke-width="8"/>
                  <path d="M860 400l335 225 356 212M1190 610l361-188M1215 620l336-178" stroke-width="7"/>
                  <path d="M1185 615l-65 110-185 211M1200 620l-55 110-180 206M1215 630l-50 110-175 180M1230 630l-60 80" stroke-width="6"/>
                  <path d="M1125 720l95 95 25 121M1135 740l100 70 35 126M1140 710l110 100 35 126M1100 720l50 30M1170 620l40 20" stroke-width="6"/>
                  <path d="M1551 605l-220 120-200 170 20 41M1225 795l225 120 101-85M1330 700l221 125M1260 640l90 70-20 40M1330 710h-30l-70 60M1470 490l50 90M1495 480l60 90M1370 580l50 80" stroke-width="7"/>
                  <path d="M1080 830l45 50M1190 720l70-20" stroke-width="5"/>
                  <circle cx="307" cy="438" r="16" stroke-width="9"/>
                </g>
                <path d="M620 568l18 10-10 16-16-10z" fill="#fff"/>
                <path d="M897-12Q820 150 805 260 780 420 805 490 830 650 890 725L980 810l145 132" stroke="#ff0022" stroke-width="19"/>
              </svg>
            </svg>
          </article>
        </div>
        <div class="flex w-4 flex-col items-center justify-between border-l border-[#777] bg-[#999] py-[6px]">
          <svg class="h-[6px] w-[8px]" viewBox="0 0 7 5"><use href="#up"/></svg>
          <span class="h-4 w-[15px] border-y border-[#666] bg-[#e6e6e6]"></span>
          <svg class="h-[6px] w-[8px]" viewBox="0 0 7 5"><use href="#down"/></svg>
        </div>
      </div>
      <footer class="flex h-[16px] items-center border-t border-[#666] bg-[#d6d6d6] pl-[4px]">
        <div class="flex h-full w-[58px] border-x border-[#666] bg-white"><input aria-label="Zoom level" value="100%" class="min-w-0 flex-1 px-[3px] outline-none"><button aria-label="Zoom levels" class="flex w-[15px] items-center justify-center border-l border-[#666]"><svg class="h-[5px] w-[7px]"><use href="#down"/></svg></button></div>
        <svg class="ml-[8px] h-[7px] w-[26px] text-[#999]" viewBox="0 0 26 7"><path d="M1 0v7M8 0v7L3 3.500zM24 0v7l-5-3.500z" fill="currentColor" stroke="currentColor" stroke-width=".5"/></svg>
        <div class="ml-[8px] flex h-full w-[58px] border-x border-[#666] bg-white"><input aria-label="Artboard number" value="1" class="min-w-0 flex-1 px-[3px] outline-none"><button aria-label="Artboards list" class="flex w-[15px] items-center justify-center border-l border-[#666]"><svg class="h-[5px] w-[7px]"><use href="#down"/></svg></button></div>
        <svg class="ml-[9px] h-[7px] w-[26px] text-[#999]" viewBox="0 0 26 7"><path d="M2 0v7l5-3.500zM18 0v7l5-3.500zM25 0v7" fill="currentColor" stroke="currentColor" stroke-width=".5"/></svg>
        <span class="ml-[6px] flex h-full w-[201px] items-center justify-center border-x border-[#888]">Toggle Direct Selection</span>
        <button aria-label="Status menu" class="flex w-[17px] justify-center"><svg class="h-[8px] w-[5px]"><path d="M0 0v8l5-4z"/></svg></button>
        <div class="flex h-full flex-1 items-center justify-between border-l border-[#666] bg-[#999] px-[6px]"><svg class="h-[8px] w-[6px]"><path d="M6 0v8L0 4z"/></svg><span class="h-full w-[17px] border-x border-[#666] bg-[#e6e6e6]"></span><svg class="h-[8px] w-[6px]"><path d="M0 0v8l6-4z"/></svg></div>
        <span class="h-full w-4 border-l border-[#777] bg-[#e0e0e0]"></span>
      </footer>
    </section>

    <!-- Panel dock -->
    <aside class="ml-px w-[273px] border-l border-[#666] [&_nav]:flex [&_nav]:h-[17px] [&_nav]:bg-[#939393] [&_nav]:font-bold [&_nav]:text-[#333] [&_nav_button]:border-r [&_nav_button]:border-b [&_nav_button]:border-[#666] [&_nav_button]:px-[6px] [&_nav_button]:text-left [&_nav_button]:whitespace-nowrap">
      <button aria-label="Collapse panels" class="flex h-[12px] w-full items-center justify-end border-b border-[#666] bg-linear-to-b from-[#9a9a9a] to-[#858585] pr-1"><svg class="h-[5px] w-[8px]" viewBox="0 0 8 5"><path d="M0 0v5l4-2.500zM4 0v5l4-2.500z" fill="#333"/></svg></button>

      <!-- Color -->
      <nav><button class="flex w-[48px] items-center gap-[3px] border-b-transparent! bg-[#d6d6d6] px-[5px]!"><svg class="h-[9px] w-[5px] shrink-0"><use href="#updown"/></svg>Color</button><button class="w-[74px]">Color Guide</button><span class="flex flex-1 items-center justify-end border-b border-[#666] pr-1"><svg class="h-[8px] w-[14px]"><use href="#menu"/></svg></span></nav>
      <div class="h-[290px] px-[5px] pt-[6px]">
        <div class="flex h-[132px]">
          <div class="w-[40px]">
            <div class="flex gap-[9px] pt-px pl-px"><svg class="size-[10px]"><use href="#defaults"/></svg><svg class="size-[10px]"><use href="#swap"/></svg></div>
            <svg class="mt-[7px] h-[31px] w-[30px]"><path d="M.5.5h18v18H.5z" fill="#fff" stroke="#555"/><path d="M2 2h15v15H2z"/><path d="M10.500 10.500h19v19h-19z" fill="#fff" stroke="#555"/><path d="M16.500 16.500h7v7h-7z" fill="#ccc" stroke="#555"/><path d="M11 29L29 11" stroke="#f00020" stroke-width="1.500"/></svg>
            <div class="mt-[35px] flex items-center gap-[8px] pl-[7px]"><svg class="h-[11px] w-[9px]" viewBox="0 0 9 11"><path d="M3 3h2v6h4v1.500H3zM0 5l4-4.500L8 5z" fill="#333"/></svg><span class="size-[15px] border border-[#555] bg-white"></span></div>
            <svg class="mt-[8px] h-[14px] w-[40px]"><path d="M.5.500h39v13H.5z" fill="#fff" stroke="#555"/><path d="M14 1h12v12H14z"/><path d="M1 13L13 1" stroke="#f00020" stroke-width="1.500"/></svg>
          </div>
          <div class="[&_input[type=range]]:h-[6px] [&_input[type=range]]:w-[113px] [&_input[type=range]]:appearance-none [&_input[type=range]]:border [&_input[type=range]]:border-[#666] [&_input[type=range]]:bg-[#c8c8c8] [&_input::-webkit-slider-thumb]:appearance-none [&_label]:flex [&_label]:h-[25px] [&_label]:items-center [&_span]:w-[18px] [&_input[type=text]]:mr-px [&_input[type=text]]:ml-[6px] [&_input[type=text]]:h-[19px] [&_input[type=text]]:w-[34px] [&_input[type=text]]:border [&_input[type=text]]:border-[#666] [&_input[type=text]]:bg-white pl-[7px]">
            <label><span>C</span><input type="range" aria-label="Cyan"><input type="text" aria-label="Cyan value">%</label>
            <label><span>M</span><input type="range" aria-label="Magenta"><input type="text" aria-label="Magenta value">%</label>
            <label><span>Y</span><input type="range" aria-label="Yellow"><input type="text" aria-label="Yellow value">%</label>
            <label><span>K</span><input type="range" aria-label="Black"><input type="text" aria-label="Black value">%</label>
          </div>
        </div>
        <div class="flex items-end">
          <svg class="ml-px h-[146px] w-[249px] shrink-0" viewBox="0 0 249 146">
            <defs>
              <linearGradient id="hue"><stop stop-color="#ff0022"/><stop offset=".08" stop-color="#ff6b2c"/><stop offset=".16" stop-color="#ffe75a"/><stop offset=".24" stop-color="#a4cd57"/><stop offset=".34" stop-color="#55bd5c"/><stop offset=".46" stop-color="#55c5a0"/><stop offset=".54" stop-color="#00c8f0"/><stop offset=".59" stop-color="#2b90c8"/><stop offset=".66" stop-color="#2b5ba8"/><stop offset=".75" stop-color="#7359a3"/><stop offset=".84" stop-color="#cc4f97"/><stop offset=".92" stop-color="#ff0080"/><stop offset="1" stop-color="#ff0022"/></linearGradient>
              <linearGradient id="hue2"><stop stop-color="#b00018"/><stop offset=".16" stop-color="#a08a30"/><stop offset=".27" stop-color="#08b050"/><stop offset=".4" stop-color="#00b25a"/><stop offset=".5" stop-color="#00aa9a"/><stop offset=".6" stop-color="#00509c"/><stop offset=".72" stop-color="#22338c"/><stop offset=".84" stop-color="#93278f"/><stop offset=".93" stop-color="#b80050"/><stop offset="1" stop-color="#c80020"/></linearGradient>
              <linearGradient id="white" x2="0" y2="1"><stop stop-color="#fff"/><stop offset=".25" stop-color="#fff" stop-opacity=".4"/><stop offset=".5" stop-color="#fff" stop-opacity="0"/></linearGradient>
              <linearGradient id="fade" x2="0" y2="1"><stop offset=".45" stop-color="#000"/><stop offset=".64" stop-color="#fff"/></linearGradient>
              <linearGradient id="black" x2="0" y2="1"><stop offset=".6" stop-opacity="0"/><stop offset=".84" stop-opacity=".65"/><stop offset="1"/></linearGradient>
              <mask id="low"><path d="M0 0h249v146H0z" fill="url(#fade)"/></mask>
            </defs>
            <path d="M0 0h249v146H0z" fill="url(#hue)"/><path d="M0 0h249v146H0z" fill="url(#white)"/><path d="M0 0h249v146H0z" fill="url(#hue2)" mask="url(#low)"/><path d="M0 0h249v146H0z" fill="url(#black)"/><path d="M.5.5h248v145H.5z" fill="none" stroke="#555"/>
          </svg>
          <svg class="-mb-1 ml-[5px] h-[10px] w-[10px] shrink-0"><path d="M9.500 0v10M7.500 2v8M5.500 4v6M3.500 6v4M1.500 8v2" stroke="#555" stroke-dasharray="1 1"/></svg>
        </div>
      </div>
      <div class="h-[3px] border-y border-[#666] bg-[#8c8c8c]"></div>

      <!-- Symbols -->
      <nav><button class="w-[62px]">Swatches</button><button class="w-[55px]">Brushes</button><button class="w-[57px] border-b-transparent! bg-[#d6d6d6]">Symbols</button><span class="flex flex-1 items-center justify-end border-b border-[#666] pr-1"><svg class="h-[8px] w-[14px]"><use href="#menu"/></svg></span></nav>
      <div class="mt-px h-[3px] border-y border-[#666] bg-[#8c8c8c]"></div>

      <!-- Stroke -->
      <nav id="stroke"><button class="flex w-[53px] items-center gap-[3px] border-b-transparent! bg-[#d6d6d6] px-[5px]!"><svg class="h-[9px] w-[5px] shrink-0"><use href="#updown"/></svg>Stroke</button><button class="w-[57px]">Gradient</button><button class="w-[84px]">Transparency</button><span class="flex flex-1 items-center justify-end border-b border-[#666] pr-1"><svg class="h-[8px] w-[14px]"><use href="#menu"/></svg></span></nav>
      <div class="h-[312px] px-[5px] pt-[4px] text-[#999]">
        <div class="w-[230px]">
          <div class="flex h-[26px] items-center text-black"><span class="w-[63px] text-right">Weight:</span>
            <div class="ml-[4px] flex h-[19px] w-[91px] border border-[#666] bg-white">
              <div class="flex w-[15px] flex-col border-r border-[#666] bg-[#efefef]"><button aria-label="Increase weight" class="flex flex-1 items-center justify-center border-b border-[#666]"><svg class="h-1 w-[6px]"><use href="#up"/></svg></button><button aria-label="Decrease weight" class="flex flex-1 items-center justify-center"><svg class="h-1 w-[6px]"><use href="#down"/></svg></button></div>
              <input aria-label="Weight" class="min-w-0 flex-1 px-1 outline-none">
              <button aria-label="Weight values" class="flex w-[15px] items-center justify-center border-l border-[#666] bg-[#efefef]"><svg class="h-[5px] w-[7px]"><use href="#down"/></svg></button>
            </div>
          </div>
          <div class="flex h-[26px] items-center"><span class="w-[63px] text-right">Cap:</span>
            <svg class="ml-[4px] h-[19px] w-[70px]" fill="none" stroke="#aaa"><path d="M.5.500h69v18H.5zM23.500 0v19M46.500 0v19" fill="#e4e4e4" stroke="#999"/><path d="M18 4.500h-6v10h6M10 9.500h8M41 4.500h-6q-5 0-5 5t5 5h6M35 9.500h6M64 4.500H53v10h11M58 9.500h6"/><path d="M10 8h3v3h-3zM33 8h3v3h-3zM56 8h3v3h-3z" fill="#888" stroke="none"/></svg>
          </div>
          <div class="flex h-[26px] items-center"><span class="w-[63px] text-right">Corner:</span>
            <svg class="ml-[4px] h-[19px] w-[70px]" fill="none" stroke="#aaa"><path d="M.5.500h69v18H.5zM23.500 0v19M46.500 0v19" fill="#e4e4e4" stroke="#999"/><path d="M18 4.500H6.500V15M29.500 15V9q0-4.500 4-4.500H41M52.500 15V9l4.500-4.500h7"/><path d="M18 9.500h-6.500V15m6.500-1h-3v2M41 9.500h-6.500V15m6.500-1h-3v2M64 9.500h-6.500V15m6.500-1h-3v2" stroke="#888"/><path d="M10 8h3v3h-3zM33 8h3v3h-3zM56 8h3v3h-3z" fill="#888" stroke="none"/></svg>
            <label for="limit" class="ml-[9px] w-[31px]">Limit:</label><input id="limit" disabled class="h-[19px] w-[42px] border border-[#999] bg-[#e4e4e4]"><span class="ml-[4px]">x</span>
          </div>
          <div class="flex h-[26px] items-center"><span class="w-[63px] text-right whitespace-nowrap">Align Stroke:</span>
            <svg class="ml-[4px] h-[19px] w-[70px]" fill="none" stroke="#aaa"><path d="M.5.500h69v18H.5zM23.500 0v19M46.500 0v19" fill="#e4e4e4" stroke="#999"/><path d="M6.500 4v11.500H18M12.500 4v6H18v3h-9M35.500 4v6H41M53 4.500h5.500M53 4v10.500h11"/><path d="M9.500 4v9M30.500 4v10.500H41M57.500 4v6.500H64" stroke="#888"/><path d="M8 11h3v3H8zM29 13h3v3h-3zM56 9h3v3h-3z" fill="#888" stroke="none"/></svg>
          </div>
          <div class="mt-[2px] border-t border-[#999]"></div>
          <div class="flex h-[34px] items-center text-black">
            <label class="flex items-center gap-[4px] pl-px"><span class="relative size-[12px]"><input type="checkbox" class="block size-[12px] appearance-none border border-[#444] bg-[#eee]"><span class="pointer-events-none absolute top-[5px] left-[2px] h-[2px] w-[8px] bg-black"></span></span>Dashed Line</label>
            <svg class="mr-px ml-auto h-[20px] w-[79px]" fill="none" stroke="#aaa" stroke-width="2"><path d="M.5.5h78v19H.5zM39.500 0v20" fill="#e4e4e4" stroke="#999" stroke-width="1"/><path d="M11 5H7v10h3M14 15h7m4 0h7M14 5h8m4 0h7v5M49 5h-3v4m0 3v3h4M54 5h6m4 0h6v4m0 3v3h-4M54 15h6"/></svg>
          </div>
          <div class="grid grid-cols-6 gap-x-[2px] pr-[6px] pl-px text-center leading-[13px] [&_input]:h-[19px] [&_input]:w-full [&_input]:border [&_input]:border-[#999] [&_input]:bg-[#e4e4e4] [&_label]:flex [&_label]:flex-col [&_label]:gap-px">
            <label><input disabled>dash</label><label><input disabled>gap</label><label><input disabled>dash</label><label><input disabled>gap</label><label><input disabled>dash</label><label><input disabled>gap</label>
          </div>
          <div class="mt-[4px] border-t border-[#999]"></div>
          <div class="mt-[3px] flex h-[30px] items-center"><span class="w-[63px] text-right">Arrowheads:</span>
            <div class="relative ml-[4px] h-[19px] w-[58px]"><select aria-label="Start arrowhead" disabled class="h-full w-full appearance-none border border-[#666] bg-[#e4e4e4] opacity-100"></select><span class="pointer-events-none absolute inset-y-px right-px flex w-[15px] items-center justify-center border-l border-[#777]"><svg class="h-[5px] w-[7px]"><use href="#down"/></svg></span></div>
            <div class="relative ml-[12px] h-[19px] w-[58px]"><select aria-label="End arrowhead" disabled class="h-full w-full appearance-none border border-[#666] bg-[#e4e4e4] opacity-100"></select><span class="pointer-events-none absolute inset-y-px right-px flex w-[15px] items-center justify-center border-l border-[#777]"><svg class="h-[5px] w-[7px]"><use href="#down"/></svg></span></div>
            <svg class="ml-[17px] h-[11px] w-[13px]"><path d="M1 3h8M4 8h8" stroke="#888"/><path d="M8 .5L12 3 8 5.500zM4 5.500L0 8l4 2.500z" fill="#888"/></svg>
          </div>
          <div class="flex h-[29px] items-center"><span class="w-[63px] text-right">Scale:</span>
            <div class="ml-[4px] flex h-[19px] w-[58px] border border-[#999] bg-[#e4e4e4]"><div class="flex w-[15px] flex-col items-center justify-around border-r border-[#999]"><svg class="h-1 w-[6px]"><use href="#up"/></svg><span class="h-px w-full bg-[#999]"></span><svg class="h-1 w-[6px]"><use href="#down"/></svg></div><input aria-label="Start scale" disabled value="100%" class="min-w-0 flex-1 pl-1 text-[#aaa]"></div>
            <div class="ml-[12px] flex h-[19px] w-[58px] border border-[#999] bg-[#e4e4e4]"><div class="flex w-[15px] flex-col items-center justify-around border-r border-[#999]"><svg class="h-1 w-[6px]"><use href="#up"/></svg><span class="h-px w-full bg-[#999]"></span><svg class="h-1 w-[6px]"><use href="#down"/></svg></div><input aria-label="End scale" disabled value="100%" class="min-w-0 flex-1 pl-1 text-[#aaa]"></div>
            <svg class="ml-[14px] h-[15px] w-[17px]" fill="none" stroke="#999"><path d="M5.500 6V4q0-3 3-3t3 3v2M5.500 9v2q0 3 3 3t3-3V9" stroke-width="2"/><path d="M0 7.500h3M14 7.500h3M1 2l2 2M16 2l-2 2M1 13l2-2M16 13l-2-2"/></svg>
          </div>
          <div class="flex h-[30px] items-center"><span class="w-[63px] text-right">Align:</span>
            <svg class="ml-[4px] h-[20px] w-[47px]" fill="none" stroke="#999"><path d="M.5.500h46v19H.5zM23.500 0v20" fill="#e4e4e4"/><path d="M5 4.500h7V7M5 11.500h8M28 4.500h15V7M28 11.500h8"/><path d="M12 7l7 4.500-7 4.500zM36 7l6 4.500-6 4.500z" fill="#999" stroke="none"/></svg>
          </div>
          <div class="mt-px border-t border-[#999]"></div>
          <div class="mt-[3px] flex h-[30px] items-center"><span class="w-[63px] text-right">Profile:</span>
            <div class="relative ml-[4px] h-[19px] w-[109px]"><select aria-label="Profile" disabled class="h-full w-full appearance-none border border-[#666] bg-[#e4e4e4] opacity-100"></select><span class="pointer-events-none absolute inset-y-px right-px flex w-[15px] items-center justify-center border-l border-[#777]"><svg class="h-[5px] w-[7px]"><use href="#down"/></svg></span></div>
            <svg class="ml-[11px] h-[11px] w-[13px]"><path d="M.5 1.500v8l4-4z" fill="none" stroke="#999"/><path d="M6.500 0v11" stroke="#999" stroke-dasharray="1 1"/><path d="M13 1v9L8 5.500z" fill="#999"/></svg>
            <svg class="ml-[12px] h-[13px] w-[11px]"><path d="M1 0h9L5.500 5z" fill="#999"/><path d="M0 6.500h11" stroke="#999" stroke-dasharray="1 1"/><path d="M1.500 12.500h8l-4-4z" fill="none" stroke="#999"/></svg>
          </div>
        </div>
      </div>
      <div class="h-[3px] border-y border-[#666] bg-[#8c8c8c]"></div>

      <!-- Align -->
      <nav><button class="w-[68px]">Transform</button><button class="flex w-[47px] items-center gap-[3px] border-b-transparent! bg-[#d6d6d6] px-[5px]!"><svg class="h-[9px] w-[5px] shrink-0"><use href="#updown"/></svg>Align</button><button class="w-[66px]">Pathfinder</button><span class="flex flex-1 items-center justify-end border-b border-[#666] pr-1"><svg class="h-[8px] w-[14px]"><use href="#menu"/></svg></span></nav>
      <div class="h-[164px] px-[5px] pt-[5px]">
        <div class="w-[230px] [&_svg]:h-[16px] [&_svg]:w-[16px]">
          <p>Align Objects:</p>
          <div class="flex h-[36px] items-center gap-[20px] border-b border-[#999] pl-[5px]">
            <button aria-label="Align left"><svg viewBox="0 0 16 16" fill="none" stroke="#333"><path d="M1.500 1v14M3.500 2.500h6v4h-6z"/><path d="M3.500 9.500h10v4h-10z" fill="#666"/></svg></button>
            <button aria-label="Align center"><svg viewBox="0 0 16 16" fill="none" stroke="#333"><path d="M7.500 0v16M4.500 2.500h6v4h-6z" fill="#eee"/><path d="M2.500 9.500h10v4h-10z" fill="#666"/></svg></button>
            <button aria-label="Align right"><svg viewBox="0 0 16 16" fill="none" stroke="#333"><path d="M14.500 1v14M6.500 2.500h6v4h-6z"/><path d="M2.500 9.500h10v4h-10z" fill="#666"/></svg></button>
            <button aria-label="Align top" class="ml-[24px]"><svg viewBox="0 0 16 16" fill="none" stroke="#333"><path d="M1 1.500h14M9.500 3.500h4v6h-4z"/><path d="M2.500 3.500h4v10h-4z" fill="#666"/></svg></button>
            <button aria-label="Align middle"><svg viewBox="0 0 16 16" fill="none" stroke="#333"><path d="M0 7.500h16M9.500 4.500h4v6h-4z" fill="#eee"/><path d="M2.500 2.500h4v10h-4z" fill="#666"/></svg></button>
            <button aria-label="Align bottom"><svg viewBox="0 0 16 16" fill="none" stroke="#333"><path d="M1 14.500h14M9.500 6.500h4v6h-4z"/><path d="M2.500 2.500h4v10h-4z" fill="#666"/></svg></button>
          </div>
          <p class="mt-[5px]">Distribute Objects:</p>
          <div class="flex h-[36px] items-center gap-[20px] border-b border-[#999] pl-[5px]">
            <button aria-label="Distribute top"><svg viewBox="0 0 16 16" fill="none" stroke="#333"><path d="M0 2.500h16M0 9.500h16M5.500 2.500h5v4h-5z"/><path d="M3.500 9.500h9v4h-9z" fill="#666"/></svg></button>
            <button aria-label="Distribute vertical centers"><svg viewBox="0 0 16 16" fill="none" stroke="#333"><path d="M0 4.500h16M0 11.500h16M5.500 2.500h5v4h-5z" fill="#eee"/><path d="M3.500 9.500h9v4h-9z" fill="#666"/></svg></button>
            <button aria-label="Distribute bottom"><svg viewBox="0 0 16 16" fill="none" stroke="#333"><path d="M0 6.500h16M0 14.500h16M5.500 2.500h5v4h-5z"/><path d="M3.500 10.500h9v4h-9z" fill="#666"/></svg></button>
            <button aria-label="Distribute left" class="ml-[24px]"><svg viewBox="0 0 16 16" fill="none" stroke="#333"><path d="M3.500 0v16M10.500 0v16M10.500 5.500h4v5h-4z"/><path d="M3.500 3.500h4v9h-4z" fill="#666"/></svg></button>
            <button aria-label="Distribute horizontal centers"><svg viewBox="0 0 16 16" fill="none" stroke="#333"><path d="M5.500 0v16M12.500 0v16M10.500 5.500h4v5h-4z" fill="#eee"/><path d="M3.500 3.500h4v9h-4z" fill="#666"/></svg></button>
            <button aria-label="Distribute right"><svg viewBox="0 0 16 16" fill="none" stroke="#333"><path d="M6.500 0v16M13.500 0v16M2.500 5.500h4v5h-4z"/><path d="M9.500 3.500h4v9h-4z" fill="#666"/></svg></button>
          </div>
          <div class="mt-[5px] flex">
            <div class="w-[165px] border-r border-[#999] pb-[6px]">
              <p>Distribute Spacing:</p>
              <div class="mt-[6px] flex items-center pl-[5px]">
                <button aria-label="Vertical distribute space"><svg viewBox="0 0 16 16" fill="none" stroke="#333"><path d="M1 7.500h4M1 10.500h4M7.500 2.500h4v4h-4z"/><path d="M6.500 9.500h8v4h-8z" fill="#666"/></svg></button>
                <button aria-label="Horizontal distribute space" class="ml-[15px]"><svg viewBox="0 0 16 16" fill="none" stroke="#333"><path d="M6.500 1v4M9.500 1v4M9.500 7.500h4v4h-4z"/><path d="M2.500 6.500h4v8h-4z" fill="#666"/></svg></button>
                <div class="ml-[11px] flex h-[19px] w-[81px] border border-[#999] bg-[#e4e4e4] text-[#999] [&_svg]:h-1! [&_svg]:w-[6px]!"><div class="flex w-[15px] flex-col items-center justify-around border-r border-[#999]"><svg><use href="#up"/></svg><span class="h-px w-full bg-[#999]"></span><svg><use href="#down"/></svg></div><input aria-label="Spacing" disabled value="0 mm" class="min-w-0 flex-1 pl-1 text-[#aaa]"></div>
              </div>
            </div>
            <div class="flex-1 pt-px text-right"><p>Align To:</p><button aria-label="Align to artboard" class="mt-[7px] mr-[13px]"><svg class="h-[16px]! w-[24px]!" viewBox="0 0 24 16" fill="none" stroke="#333"><path d="M3.500 0v16M13.500 0v16M0 3.500h17M0 13.500h17" stroke-dasharray="2 1" stroke="#888"/><path d="M3.500 3.500h10v10h-10z" fill="#eee"/><path d="M8.500 4.500v2M8.500 10.500v2M4.500 8.500h2M10.500 8.500h2" stroke-width="2"/><path d="M17 7h7l-3.500 4z" fill="#333" stroke="none"/></svg></button></div>
          </div>
        </div>
      </div>
      <div class="h-[3px] border-y border-[#666] bg-[#8c8c8c]"></div>

      <!-- Appearance -->
      <nav><button class="w-[75px] border-b-transparent! bg-[#d6d6d6]">Appearance</button><button class="w-[86px]">Graphic Styles</button><span class="flex flex-1 items-center justify-end border-b border-[#666] pr-1"><svg class="h-[8px] w-[14px]"><use href="#menu"/></svg></span></nav>
      <div class="mt-px h-[3px] border-y border-[#666] bg-[#8c8c8c]"></div>

      <!-- Layers -->
      <nav><button class="w-[48px] border-b-transparent! bg-[#d6d6d6]">Layers</button><button class="w-[65px]">Artboards</button><span class="flex flex-1 items-center justify-end border-b border-[#666] pr-1"><svg class="h-[8px] w-[14px]"><use href="#menu"/></svg></span></nav>
      <div class="px-[5px] pt-[6px]">
        <div class="flex h-[141px] w-[262px] border border-[#666]">
          <ul class="flex flex-1 flex-col justify-end overflow-hidden bg-[#c6c6c6] [&_li]:flex [&_li]:h-[21px] [&_li]:shrink-0 [&_li]:items-center [&_li]:border-b [&_li]:border-[#999]">
            <li class="leading-[8px]"><svg class="ml-[3px] h-[9px] w-[12px]"><use href="#eye"/></svg><span class="ml-[5px] h-full w-[22px] border-l border-[#999]"></span><span class="h-[18px] w-[3px] bg-[#f8652a]"></span><span class="ml-px h-full w-[63px] border-l border-[#999]"></span><svg class="size-[18px]"><path d="M.5.5h17v17H.5z" fill="#fff" stroke="#000"/><path d="M6 17L9 1" stroke="#00c4e6" stroke-width="6"/></svg><span class="ml-[6px]">&lt;Path&gt;</span><span class="ml-auto flex h-full w-[36px] items-center border-l border-[#999] pl-[5px]"><span class="size-[9px] rounded-full border border-[#444]"></span></span></li>
            <li><svg class="ml-[3px] h-[9px] w-[12px]"><use href="#eye"/></svg><span class="ml-[5px] h-full w-[22px] border-l border-[#999]"></span><span class="h-[18px] w-[3px] bg-[#f8652a]"></span><span class="ml-px h-full w-[63px] border-l border-[#999]"></span><svg class="size-[18px]"><path d="M.5.5h17v17H.5z" fill="#fff" stroke="#000"/><path d="M1 4l7 7 9 2" fill="none" stroke="#00c4e6" stroke-width="1.500"/></svg><span class="ml-[6px]">&lt;Path&gt;</span><span class="ml-auto flex h-full w-[36px] items-center border-l border-[#999] pl-[5px]"><span class="size-[9px] rounded-full border border-[#444]"></span></span></li>
            <li><svg class="ml-[3px] h-[9px] w-[12px]"><use href="#eye"/></svg><span class="ml-[5px] h-full w-[22px] border-l border-[#999]"></span><span class="h-[18px] w-[3px] bg-[#f8652a]"></span><span class="ml-px h-full w-[63px] border-l border-[#999]"></span><svg class="size-[18px]"><path d="M.5.5h17v17H.5z" fill="#fff" stroke="#000"/><path d="M5 17l9-16" stroke="#00c4e6" stroke-width="2"/></svg><span class="ml-[6px]">&lt;Path&gt;</span><span class="ml-auto flex h-full w-[36px] items-center border-l border-[#999] pl-[5px]"><span class="size-[9px] rounded-full border border-[#444]"></span></span></li>
            <li><svg class="ml-[3px] h-[9px] w-[12px]"><use href="#eye"/></svg><span class="ml-[5px] h-full w-[22px] border-l border-[#999]"></span><span class="h-[18px] w-[3px] bg-[#f8652a]"></span><span class="ml-px h-full w-[63px] border-l border-[#999]"></span><svg class="size-[18px]"><path d="M.5.5h17v17H.5z" fill="#fff" stroke="#000"/><path d="M3 1l12 16" stroke="#00c4e6" stroke-width="3"/></svg><span class="ml-[6px]">&lt;Path&gt;</span><span class="ml-auto flex h-full w-[36px] items-center border-l border-[#999] pl-[5px]"><span class="size-[9px] rounded-full border border-[#444]"></span></span></li>
            <li><svg class="ml-[3px] h-[9px] w-[12px]"><use href="#eye"/></svg><span class="ml-[5px] h-full w-[22px] border-l border-[#999]"></span><span class="h-[18px] w-[3px] bg-[#f8652a]"></span><span class="ml-px h-full w-[63px] border-l border-[#999]"></span><svg class="size-[18px]"><path d="M.5.5h17v17H.5z" fill="#fff" stroke="#000"/><path d="M1.500 2l15 14" stroke="#00c4e6" stroke-width="2.500"/></svg><span class="ml-[6px]">&lt;Path&gt;</span><span class="ml-auto flex h-full w-[36px] items-center border-l border-[#999] pl-[5px]"><span class="size-[9px] rounded-full border border-[#444]"></span></span></li>
            <li><svg class="ml-[3px] h-[9px] w-[12px]"><use href="#eye"/></svg><span class="ml-[5px] h-full w-[22px] border-l border-[#999]"></span><span class="h-[18px] w-[3px] bg-[#f8652a]"></span><span class="ml-px h-full w-[63px] border-l border-[#999]"></span><svg class="size-[18px]"><path d="M.5.5h17v17H.5z" fill="#fff" stroke="#000"/><path d="M1 3h16v11H1z" fill="#d6d6d6"/></svg><span class="ml-[6px]">&lt;Path&gt;</span><span class="ml-auto flex h-full w-[36px] items-center border-l border-[#999] pl-[5px]"><span class="size-[9px] rounded-full border border-[#444]"></span></span></li>
            <li class="relative h-[19px]! border-b-0! bg-[#b8d6f0]"><svg class="ml-[3px] h-[9px] w-[12px]"><use href="#eye"/></svg><span class="ml-[5px] h-full w-[22px] border-l border-[#999]"></span><span class="h-[18px] w-[3px] bg-black"></span><span class="ml-px flex h-full w-[23px] items-center border-l border-[#999] pl-[5px]"><svg class="h-[6px] w-[8px]" viewBox="0 0 7 5"><use href="#down"/></svg></span><svg class="size-[18px]"><path d="M.5.5h17v17H.5z" fill="#fff" stroke="#000"/><path d="M3 2.500h9" stroke="#555" stroke-dasharray="3 1"/></svg><span class="ml-[5px]">Layers</span><span class="ml-auto flex h-full w-[36px] items-center border-l border-[#999] pl-[5px]"><span class="size-[9px] rounded-full border border-[#444]"></span></span><svg class="absolute top-0 right-0 size-[6px]"><path d="M0 0h6v6z" fill="#444"/></svg></li>
          </ul>
          <div class="flex w-[12px] flex-col items-center border-l border-[#666] bg-[#999]">
            <svg class="mt-[4px] h-[5px] w-[7px]"><use href="#up"/></svg>
            <span class="mt-auto h-[12px] w-full border-y border-[#666] bg-[#e6e6e6]"></span>
            <svg class="my-[6px] h-[5px] w-[7px]"><use href="#down"/></svg>
          </div>
        </div>
        <div class="flex h-[18px] w-[239px] items-center">
          <span>2 Layers</span>
          <button aria-label="Locate object" class="ml-auto"><svg class="size-[12px]" fill="none" stroke="#aaa"><circle cx="7.500" cy="4.500" r="4"/><path d="M5 7.500l-4.500 4" stroke-width="1.500"/></svg></button>
          <button aria-label="Make clipping mask" class="ml-[14px]"><svg class="size-[11px]" fill="none" stroke="#333"><path d="M.5.500h7v7h-7zM3.500 3.500h7v7h-7z"/><path d="M3 3h5v5H3z" fill="#222"/></svg></button>
          <button aria-label="Create new sublayer" class="ml-[14px]"><svg class="h-[11px] w-[15px]" fill="none" stroke="#333"><path d="M6.500 1.500h7v8h-4l-3-3zM6.500 6.500h3v3M.500 0v3.500H5M3.500 1.500l2 2-2 2"/></svg></button>
          <button aria-label="Create new layer" class="ml-[13px]"><svg class="size-[11px]" fill="none" stroke="#333"><path d="M.5 1.500h9v9H4.500l-4-4zM.5 6.500h4v4"/></svg></button>
          <button aria-label="Delete selection" class="ml-[14px]"><svg class="size-[11px]" fill="none" stroke="#333"><path d="M0 2.500h11M4 2V.5h3V2M1.500 4.500h8l-.5 6H2zM4 5v5M5.500 5v5M7 5v5"/></svg></button>
        </div>
      </div>
    </aside>
  </div>
</main>
</body>
</html>
